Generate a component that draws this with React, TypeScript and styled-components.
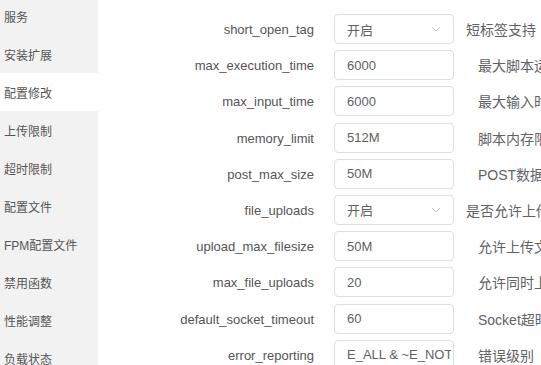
import styled, { createGlobalStyle } from "styled-components"

const GlobalStyle = createGlobalStyle`
  html, body {
    margin: 0;
    padding: 0;
    background: #fff;
    overflow: hidden;
  }
  body {
    font-family: "Liberation Sans", "Noto Sans CJK SC", sans-serif;
  }
`

const Page = styled.div`
  display: flex;
  width: 541px;
  height: 365px;
  overflow: hidden;
`

const Side = styled.div`
  width: 98px;
  flex-shrink: 0;
  background: #f2f2f2;
  margin-top: -3px;
  display: flex;
  flex-direction: column;
`

const SideItem = styled.div<{ active?: boolean }>`
  height: 38px;
  flex-shrink: 0;
  display: flex;
  align-items: center;
  padding-left: 4px;
  font-size: 12px;
  color: #555;
  background: ${p => p.active ? "#fff" : "transparent"};
`

const Content = styled.div`
  flex: 1;
  padding: 14px 0 0 16px;
  display: flex;
  flex-direction: column;
`

const Row = styled.div`
  display: flex;
  align-items: flex-start;
  height: 36.2px;
  flex-shrink: 0;
`

const Label = styled.div`
  width: 200px;
  height: 30px;
  line-height: 31px;
  text-align: right;
  padding-right: 20px;
  flex-shrink: 0;
  font-size: 13px;
  color: #555;
  white-space: nowrap;
`

const Field = styled.div`
  display: flex;
  align-items: center;
  height: 30px;
`

const Box = styled.div`
  width: 120px;
  height: 30px;
  box-sizing: border-box;
  border: 1px solid #dcdfe6;
  border-radius: 4px;
  padding: 0 2px 0 12px;
  display: flex;
  align-items: center;
  font-size: 13px;
  color: #606266;
  flex-shrink: 0;
  & span {
    white-space: nowrap;
    overflow: hidden;
    flex: 1;
  }
  & svg {
    margin-right: 10px;
    flex-shrink: 0;
  }
`

const Desc = styled.div<{ select?: boolean }>`
  margin-left: ${p => p.select ? "12px" : "24px"};
  font-size: 14px;
  color: #606266;
  white-space: nowrap;
`

const Chevron = () => (
  <svg width="10" height="6" viewBox="0 0 10 6" fill="none">
    <path d="M1 1l4 4 4-4" stroke="#c0c4cc" strokeWidth="1" />
  </svg>
)

const menu = ["服务", "安装扩展", "配置修改", "上传限制", "超时限制", "配置文件", "FPM配置文件", "禁用函数", "性能调整", "负载状态"]

const rows = [
  { name: "short_open_tag", value: "开启", select: true, desc: "短标签支持" },
  { name: "max_execution_time", value: "6000", desc: "最大脚本运行时间" },
  { name: "max_input_time", value: "6000", desc: "最大输入时间" },
  { name: "memory_limit", value: "512M", desc: "脚本内存限制" },
  { name: "post_max_size", value: "50M", desc: "POST数据最大尺寸" },
  { name: "file_uploads", value: "开启", select: true, desc: "是否允许上传文件" },
  { name: "upload_max_filesize", value: "50M", desc: "允许上传文件的最大尺寸" },
  { name: "max_file_uploads", value: "20", desc: "允许同时上传文件的数量" },
  { name: "default_socket_timeout", value: "60", desc: "Socket超时时间" },
  { name: "error_reporting", value: "E_ALL & ~E_NOTICE", desc: "错误级别" },
]

export default function App() {
  return (
    <>
      <GlobalStyle />
      <Page>
        <Side>
          {menu.map(m => (
            <SideItem key={m} active={m === "配置修改"}>{m}</SideItem>
          ))}
        </Side>
        <Content>
          {rows.map(r => (
            <Row key={r.name}>
              <Label>{r.name}</Label>
              <Field>
                <Box>
                  <span>{r.value}</span>
                  {r.select && <Chevron />}
                </Box>
                <Desc select={r.select}>{r.desc}</Desc>
              </Field>
            </Row>
          ))}
        </Content>
      </Page>
    </>
  )
}
